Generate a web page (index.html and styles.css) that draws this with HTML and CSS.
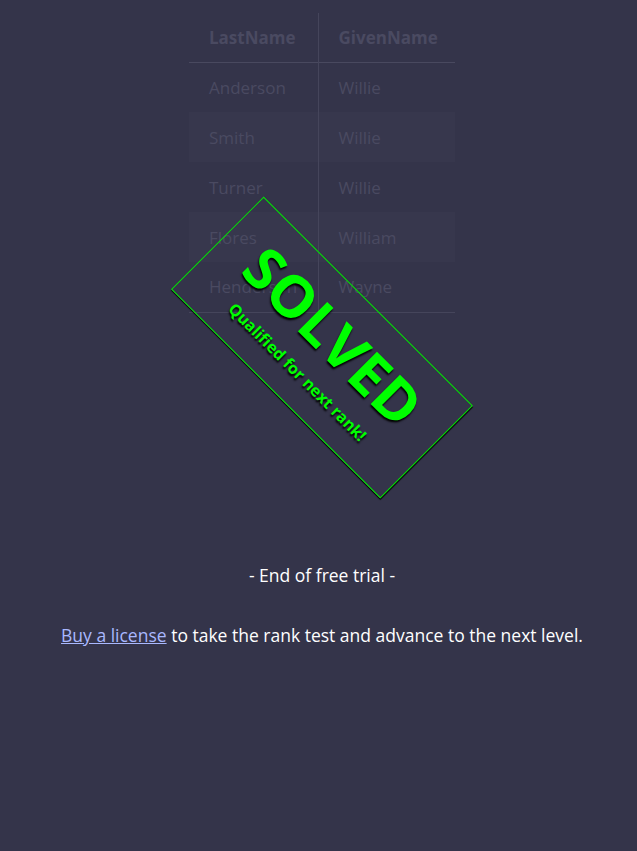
FILE: index.html
```html
<!DOCTYPE html>
<html>
<head>
<meta charset="utf-8">
<link rel="stylesheet" href="styles.css">
</head>
<body>
<main class="page">
  <section class="puzzle">
    <table class="names">
      <thead>
        <tr><th>LastName</th><th>GivenName</th></tr>
      </thead>
      <tbody>
        <tr><td>Anderson</td><td>Willie</td></tr>
        <tr class="alt"><td>Smith</td><td>Willie</td></tr>
        <tr><td>Turner</td><td>Willie</td></tr>
        <tr class="alt"><td>Flores</td><td>William</td></tr>
        <tr><td>Henderson</td><td>Wayne</td></tr>
      </tbody>
    </table>
    <div class="stamp">
      <div class="stamp-title">SOLVED</div>
      <div class="stamp-sub">Qualified for next rank!</div>
    </div>
  </section>
  <p class="end">- End of free trial -</p>
  <p class="buy"><a href="#">Buy a license</a> to take the rank test and advance to the next level.</p>
</main>
</body>
</html>
```
FILE: styles.css
```css
html, body {
  margin: 0;
  padding: 0;
  background: #34344a;
}
body {
  font-family: "Open Sans", "Noto Sans", sans-serif;
  color: #ffffff;
}
.page {
  padding: 13px 0 0 7px;
  display: flex;
  flex-direction: column;
  align-items: center;
}
.puzzle {
  position: relative;
  width: 400px;
  height: 510px;
  display: flex;
  justify-content: center;
}
.names {
  border-collapse: collapse;
  table-layout: fixed;
  width: 266px;
  align-self: flex-start;
  font-size: 17px;
  color: #4a4a61;
}
.names th, .names td {
  text-align: left;
  height: 50px;
  padding: 0 20px;
  box-sizing: border-box;
  white-space: nowrap;
  overflow: hidden;
}
.names th:first-child, .names td:first-child {
  width: 129px;
  border-right: 1px solid #45455b;
}
.names thead tr {
  border-bottom: 1px solid #49495f;
}
.names tbody tr:last-child {
  border-bottom: 1px solid #45455b;
}
.names th {
  font-weight: 700;
  height: 49px;
}
.names tr.alt {
  background: #37374d;
}
.stamp {
  position: absolute;
  left: 50%;
  top: 334px;
  width: 296px;
  height: 131px;
  margin-left: -148px;
  margin-top: -65.5px;
  box-sizing: border-box;
  border: 1px solid #00e600;
  box-shadow: 1px 1px 1px #000;
  transform: rotate(45deg);
  display: flex;
  flex-direction: column;
  align-items: center;
  justify-content: center;
  color: #00ff00;
  font-weight: 700;
  text-shadow: 1px 2px 2px #000;
}
.stamp-title {
  font-size: 58px;
  line-height: 62px;
  margin-top: -4px;
}
.stamp-sub {
  font-size: 16px;
  line-height: 20px;
  margin-top: 10px;
}
.end {
  margin: 40px 0 0;
  font-size: 17.5px;
  line-height: 24px;
}
.buy {
  margin: 36px 0 0;
  font-size: 17.5px;
  line-height: 24px;
}
.buy a {
  color: #a9b8ff;
}
```
